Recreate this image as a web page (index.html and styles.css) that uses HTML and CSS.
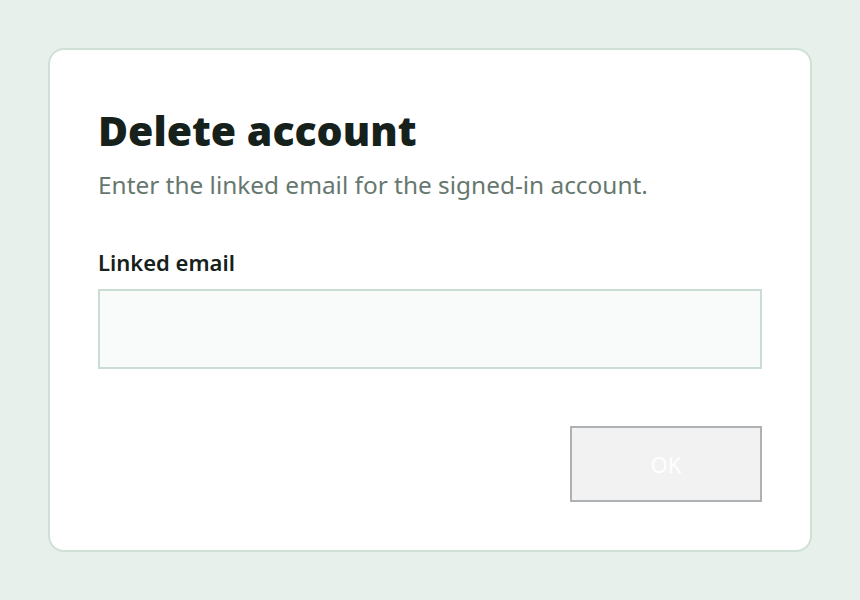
FILE: index.html
```html
<!DOCTYPE html>
<html lang="en">
<head>
  <meta charset="UTF-8" />
  <meta name="viewport" content="width=device-width, initial-scale=1.0">
  <title>Delete account</title>
  <link rel="stylesheet" href="styles.css">
</head>
<body>

  <div class="dialog">
    <h1>Delete account</h1>
    <p class="hint">Enter the linked email for the signed-in account.</p>

    <label class="label" for="email">Linked email</label>
    <input class="field" id="email" type="email">

    <div class="actions">
      <button class="okBtn" disabled>OK</button>
    </div>
  </div>

</body>
</html>
```

FILE: styles.css
```css
* {
  box-sizing: border-box;
}
body {
  font-family: 'Noto Sans', 'Open Sans', sans-serif;
  margin: 0;
  padding: 48px;
  background: #e8f0ec;
  color: #16211c;
}
.dialog {
  width: 764px;
  height: 504px;
  background: #ffffff;
  border: 2px solid #cfe0d6;
  border-radius: 16px;
  padding: 52px 48px 48px 48px;
  display: flex;
  flex-direction: column;
}
h1 {
  font-size: 41px;
  font-weight: 900;
  line-height: 56px;
  margin: 0;
  color: #16211c;
}
.hint {
  font-size: 24.4px;
  line-height: 32px;
  margin: 11px 0 0 0;
  color: #66786e;
}
.label {
  font-size: 22px;
  font-weight: 600;
  line-height: 28px;
  margin-top: 47px;
  color: #16211c;
}
.field {
  margin-top: 13px;
  width: 100%;
  height: 80px;
  border: 2px solid #c9ddd3;
  background: #f9fbfa;
  border-radius: 0;
  outline: none;
}
.actions {
  margin-top: auto;
  display: flex;
  justify-content: flex-end;
}
.okBtn {
  width: 192px;
  height: 76px;
  border: 2px solid #aeb2b5;
  background: #f2f2f2;
  color: #ffffff;
  font-family: inherit;
  font-size: 22px;
}
```
